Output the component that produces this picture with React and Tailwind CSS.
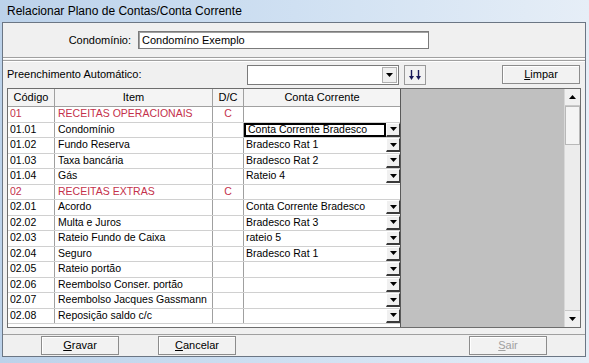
import { useState } from "react";

const rows = [
  { cod: "01", item: "RECEITAS OPERACIONAIS", dc: "C", conta: "", group: true },
  { cod: "01.01", item: "Condomínio", dc: "", conta: "Conta Corrente Bradesco", focus: true },
  { cod: "01.02", item: "Fundo Reserva", dc: "", conta: "Bradesco Rat 1" },
  { cod: "01.03", item: "Taxa bancária", dc: "", conta: "Bradesco Rat 2" },
  { cod: "01.04", item: "Gás", dc: "", conta: "Rateio 4" },
  { cod: "02", item: "RECEITAS EXTRAS", dc: "C", conta: "", group: true },
  { cod: "02.01", item: "Acordo", dc: "", conta: "Conta Corrente Bradesco" },
  { cod: "02.02", item: "Multa e Juros", dc: "", conta: "Bradesco Rat 3" },
  { cod: "02.03", item: "Rateio Fundo de Caixa", dc: "", conta: "rateio 5" },
  { cod: "02.04", item: "Seguro", dc: "", conta: "Bradesco Rat 1" },
  { cod: "02.05", item: "Rateio portão", dc: "", conta: "" },
  { cod: "02.06", item: "Reembolso Conser. portão", dc: "", conta: "" },
  { cod: "02.07", item: "Reembolso Jacques Gassmann", dc: "", conta: "" },
  { cod: "02.08", item: "Reposição saldo c/c", dc: "", conta: "" },
];

// small black down triangle
function Caret({ className = "" }) {
  return (
    <svg width="7" height="4" viewBox="0 0 7 4" className={className}>
      <path d="M0 0h7L3.5 4z" fill="#000" />
    </svg>
  );
}

function DropBtn() {
  return (
    <div className="w-[14px] h-[14px] bg-[#f0f0f0] border-r border-b-2 border-[#3a3a3a] border-l border-t border-l-[#ffffff] border-t-[#ffffff] flex items-center justify-center shrink-0">
      <Caret />
    </div>
  );
}

function WinButton({ children, className = "", disabled }) {
  return (
    <button
      className={`h-[19px] w-[78px] border border-[#8c8c8c] bg-[#f2f2f2] text-[11px] leading-none shadow-[inset_1px_1px_0_#fff] ${
        disabled ? "text-[#a0a0a0]" : "text-black"
      } ${className}`}
    >
      {children}
    </button>
  );
}

export default function App() {
  const [auto, setAuto] = useState("");

  return (
    <div
      className="w-[589px] h-[363px] overflow-hidden bg-gradient-to-r from-[#bcd2ea] via-[#cfe0f2] to-[#e6eef7] flex flex-col"
      style={{ fontFamily: '"Liberation Sans", Arial, sans-serif' }}
    >
      {/* Title bar */}
      <div className="h-[22px] pl-[7px] flex items-center text-[12px] text-black shrink-0">
        Relacionar Plano de Contas/Conta Corrente
      </div>

      {/* Client area */}
      <div className="ml-[2px] mr-[3px] h-[335px] border border-[#6b7684] bg-[#f0f0f0] flex flex-col">
        {/* Condomínio panel */}
        <div className="h-[35px] border-b border-[#a0a0a0] shadow-[0_1px_0_#fff] flex items-center">
          <span className="w-[128px] text-right text-[11px] text-black">Condomínio:</span>
          <div className="ml-[7px] w-[291px] h-[18px] bg-white border border-[#7a7a7a] shadow-[inset_1px_1px_0_#a0a0a0] text-[11px] px-[3px] flex items-center">
            Condomíno Exemplo
          </div>
        </div>

        {/* main panel */}
        <div className="mt-[2px] h-[275px] border-t border-b border-[#a0a0a0] shadow-[inset_0_1px_0_#fff] flex flex-col">
          {/* Preenchimento row */}
          <div className="h-[27px] flex items-center pl-[4px]">
            <span className="w-[240px] text-[11px] text-black">Preenchimento Automático:</span>
            <div className="w-[152px] h-[20px] bg-white border border-[#7a7a7a] flex items-center justify-end pr-[1px]">
              <input
                value={auto}
                onChange={(e) => setAuto(e.target.value)}
                className="flex-1 min-w-0 h-full outline-none text-[11px] px-[2px] bg-transparent"
              />
              <div className="w-[15px] h-[16px] bg-[#f0f0f0] border border-[#b0b0b0] flex items-center justify-center">
                <Caret />
              </div>
            </div>
            <div className="ml-[5px] w-[22px] h-[20px] border border-[#9a9a9a] bg-[#f2f2f2] flex items-center justify-center">
              <svg width="14" height="12" viewBox="0 0 14 12">
                <g stroke="#1a1a5a" strokeWidth="1.4" fill="#1a1a5a">
                  <path d="M3.5 1v7" />
                  <path d="M10.5 1v7" />
                  <path d="M1 7h5l-2.5 4z" strokeWidth="0" />
                  <path d="M8 7h5l-2.5 4z" strokeWidth="0" />
                </g>
              </svg>
            </div>
            <WinButton className="ml-auto mr-[5px] w-[58px]">
              <span className="underline">L</span>impar
            </WinButton>
          </div>

          {/* Grid */}
          <div className="ml-[4px] mr-[4px] h-[240px] border border-[#6d6d6d] flex overflow-hidden bg-white">
            <div className="w-[393px] flex flex-col text-[10.5px] shrink-0 border-r border-[#5a5a5a] whitespace-nowrap">
              {/* header */}
              <div className="h-[18px] flex bg-[#f4f4f4] border-b border-[#a0a0a0] shrink-0 text-[11px]">
                <div className="w-[47px] border-r border-[#a0a0a0] flex items-center justify-center">Código</div>
                <div className="w-[158px] border-r border-[#a0a0a0] flex items-center justify-center">Item</div>
                <div className="w-[31px] border-r border-[#a0a0a0] flex items-center justify-center">D/C</div>
                <div className="flex-1 flex items-center justify-center">Conta Corrente</div>
              </div>
              {rows.map((r) => (
                <div
                  key={r.cod}
                  className={`h-[15.5px] shrink-0 flex border-b border-[#d0d0d0] ${
                    r.group ? "text-[#c4314b]" : "text-black"
                  }`}
                >
                  <div className="w-[47px] border-r border-[#a0a0a0] pl-[2px] flex items-center overflow-hidden">{r.cod}</div>
                  <div className="w-[158px] border-r border-[#a0a0a0] pl-[3px] flex items-center overflow-hidden">{r.item}</div>
                  <div className="w-[31px] border-r border-[#a0a0a0] flex items-center justify-center">{r.dc}</div>
                  <div className="flex-1 flex items-center min-w-0">
                    {!r.group && (
                      <>
                        <div
                          className={`flex-1 min-w-0 h-full flex items-center pl-[2px] overflow-hidden ${
                            r.focus ? "border-2 border-black" : ""
                          }`}
                        >
                          {r.conta}
                        </div>
                        <DropBtn />
                      </>
                    )}
                  </div>
                </div>
              ))}
            </div>
            <div className="flex-1 bg-[#c0c0c0]" />
            {/* scrollbar */}
            <div className="w-[16px] bg-[#ececec] border-l border-[#d8d8d8] flex flex-col">
              <div className="h-[17px] bg-[#f0f0f0] border-b border-[#c8c8c8] flex items-center justify-center">
                <Caret className="rotate-180" />
              </div>
              <div className="h-[39px] bg-[#f4f4f4] border border-[#b8b8b8]" />
              <div className="flex-1" />
              <div className="h-[17px] bg-[#f0f0f0] border-t border-[#c8c8c8] flex items-center justify-center">
                <Caret />
              </div>
            </div>
          </div>
        </div>

        {/* bottom buttons */}
        <div className="flex-1 flex items-center">
          <WinButton className="ml-[38px]">
            <span className="underline">G</span>ravar
          </WinButton>
          <WinButton className="ml-[39px]">
            <span className="underline">C</span>ancelar
          </WinButton>
          <WinButton className="ml-[233px]" disabled>
            <span className="underline">S</span>air
          </WinButton>
        </div>
      </div>
    </div>
  );
}
